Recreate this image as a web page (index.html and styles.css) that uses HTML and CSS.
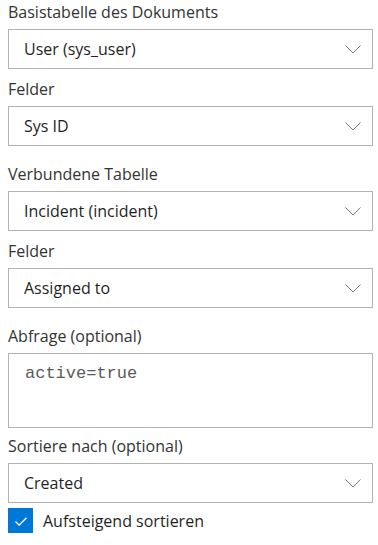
FILE: index.html
```html
<!DOCTYPE html>
<html>
<head>
<meta charset="utf-8">
<link rel="stylesheet" href="styles.css">
</head>
<body>
<div class="form">
  <div class="group">
    <div class="field">
      <div class="label">Basistabelle des Dokuments</div>
      <div class="select"><span>User (sys_user)</span><svg class="chev" viewBox="0 0 16 9"><path d="M0.5 0.5 L8 8 L15.5 0.5"/></svg></div>
    </div>
    <div class="field">
      <div class="label">Felder</div>
      <div class="select"><span>Sys ID</span><svg class="chev" viewBox="0 0 16 9"><path d="M0.5 0.5 L8 8 L15.5 0.5"/></svg></div>
    </div>
  </div>
  <div class="group">
    <div class="field">
      <div class="label">Verbundene Tabelle</div>
      <div class="select"><span>Incident (incident)</span><svg class="chev" viewBox="0 0 16 9"><path d="M0.5 0.5 L8 8 L15.5 0.5"/></svg></div>
    </div>
    <div class="field">
      <div class="label">Felder</div>
      <div class="select"><span>Assigned to</span><svg class="chev" viewBox="0 0 16 9"><path d="M0.5 0.5 L8 8 L15.5 0.5"/></svg></div>
    </div>
  </div>
  <div class="group">
    <div class="field">
      <div class="label">Abfrage (optional)</div>
      <div class="textarea">active=true</div>
    </div>
    <div class="field">
      <div class="label">Sortiere nach (optional)</div>
      <div class="select"><span>Created</span><svg class="chev" viewBox="0 0 16 9"><path d="M0.5 0.5 L8 8 L15.5 0.5"/></svg></div>
    </div>
    <div class="check">
      <span class="box"><svg viewBox="0 0 24 24"><path d="M6 12.5 L10 16.5 L18 8.5"/></svg></span>
      <span class="check-label">Aufsteigend sortieren</span>
    </div>
  </div>
</div>
</body>
</html>
```
FILE: styles.css
```css
html, body {
  margin: 0;
  padding: 0;
  background: #ffffff;
}
body {
  font-family: "Open Sans", "Noto Sans", sans-serif;
  color: #262626;
}
.form {
  padding: 0 5px 0 8px;
  display: flex;
  flex-direction: column;
  gap: 8px;
}
.group {
  display: flex;
  flex-direction: column;
}
.label {
  font-size: 16px;
  line-height: 20px;
  height: 29px;
  padding-top: 2px;
  box-sizing: border-box;
  color: #333333;
}
.select {
  height: 40px;
  box-sizing: border-box;
  border: 1px solid #b3b3b3;
  display: flex;
  align-items: center;
  justify-content: space-between;
  padding: 0 11px 0 15px;
  font-size: 16px;
  color: #1f1f1f;
  margin-bottom: 8px;
}
.chev {
  width: 16px;
  height: 9px;
  fill: none;
  stroke: #777777;
  stroke-width: 1;
}
.textarea {
  height: 75px;
  box-sizing: border-box;
  border: 1px solid #b3b3b3;
  padding: 10px 16px;
  font-family: "Liberation Mono", "Courier New", monospace;
  font-size: 17px;
  line-height: 20px;
  color: #5a5a5a;
  margin-bottom: 6px;
}
.check {
  display: flex;
  align-items: center;
  gap: 10px;
  margin-top: -3px;
}
.box {
  width: 25px;
  height: 25px;
  background: #0078d7;
  display: flex;
  align-items: center;
  justify-content: center;
}
.box svg {
  width: 22px;
  height: 22px;
  fill: none;
  stroke: #ffffff;
  stroke-width: 1.5;
}
.check-label {
  font-size: 16px;
  color: #1f1f1f;
}
```
